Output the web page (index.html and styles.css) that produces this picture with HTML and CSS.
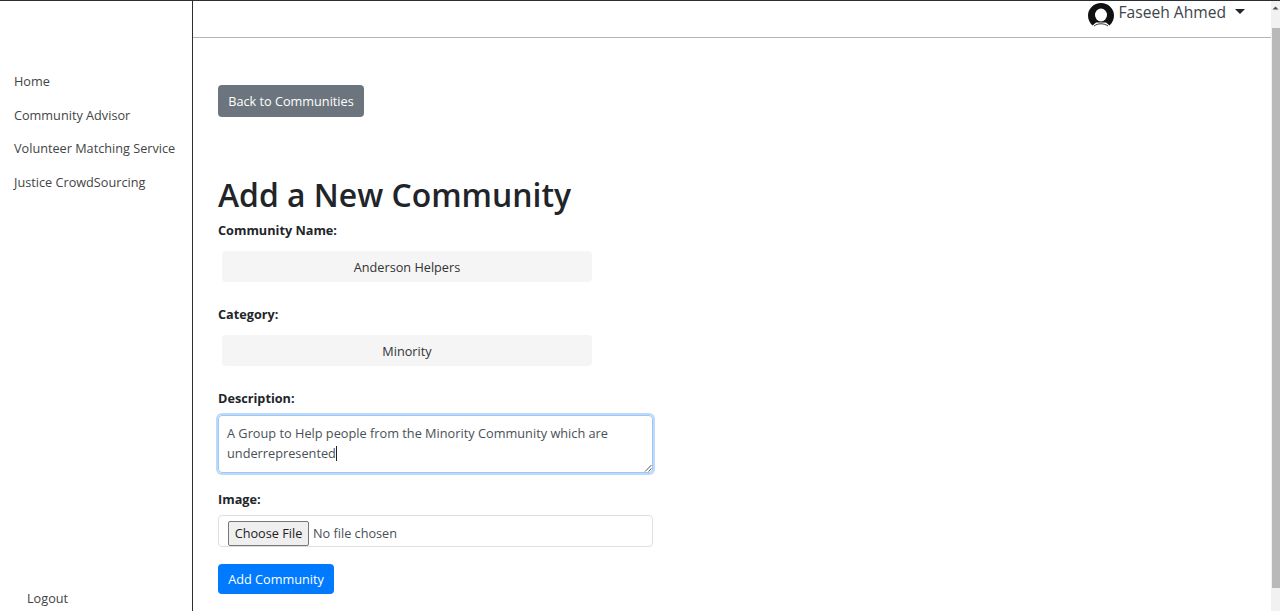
FILE: index.html
```html
<!DOCTYPE html>
<html lang="en">
<head>
<meta charset="utf-8">
<title>Add a New Community</title>
<link rel="stylesheet" href="styles.css">
</head>
<body>
<div class="app">
  <aside class="sidebar">
    <nav class="side-nav">
      <a class="side-link" href="#">Home</a>
      <a class="side-link" href="#">Community Advisor</a>
      <a class="side-link" href="#">Volunteer Matching Service</a>
      <a class="side-link" href="#">Justice CrowdSourcing</a>
    </nav>
    <a class="logout" href="#">Logout</a>
  </aside>
  <div class="main">
    <header class="topbar">
      <svg class="avatar" viewBox="0 0 26 24" width="26" height="24" aria-hidden="true">
        <path d="M13 0a13 12.500 0 0 1 13 12.500c0 4-1.800 7.500-4.500 10L18 19.500h-10l-3.500 3C1.800 20 0 16.500 0 12.500A13 12.500 0 0 1 13 0z" fill="#111"/>
        <ellipse cx="13" cy="12" rx="6" ry="6.500" fill="#fff"/>
        <path d="M6 23c2-1.500 4.500-2.200 7-2.200s5 .7 7 2.200" fill="none" stroke="#333" stroke-width="1"/>
      </svg>
      <span class="user-name">Faseeh Ahmed</span>
      <span class="caret"></span>
    </header>
    <main class="content">
      <a class="btn btn-grey" href="#">Back to Communities</a>
      <h1 class="title">Add a New Community</h1>
      <form class="form">
        <div class="group">
          <label class="label">Community Name:</label>
          <div class="readonly">Anderson Helpers</div>
        </div>
        <div class="group">
          <label class="label">Category:</label>
          <div class="readonly">Minority</div>
        </div>
        <div class="group-desc">
          <label class="label">Description:</label>
          <div class="textarea">A Group to Help people from the Minority Community which are underrepresented<span class="cursor"></span>
            <svg class="grip" viewBox="0 0 8 8" width="8" height="8" aria-hidden="true"><path d="M1 7.500 7.500 1M4.500 7.500 7.500 4.500" stroke="#555" stroke-width="1" fill="none"/></svg>
          </div>
        </div>
        <div class="group-image">
          <label class="label">Image:</label>
          <div class="file-box"><span class="file-btn">Choose File</span><span class="file-text">No file chosen</span></div>
        </div>
        <a class="btn btn-blue" href="#">Add Community</a>
      </form>
    </main>
  </div>
  <div class="scrollbar">
    <svg class="sb-arrow" viewBox="0 0 9 6" width="9" height="6" aria-hidden="true"><path d="M4.500 1.500 7.500 4.500H1.500z" fill="#505050"/></svg>
    <div class="sb-thumb"></div>
  </div>
</div>
</body>
</html>
```
FILE: styles.css
```css
* { box-sizing: border-box; }
html, body { margin: 0; height: 100%; overflow: hidden; }
body { font-family: "Open Sans", "Noto Sans", sans-serif; font-size: 12.7px; color: #212529; background: #fff; }
a { text-decoration: none; }
.app { display: flex; height: 611px; border-top: 1px solid #2b2f33; }
.sidebar { width: 193px; flex: none; border-right: 1px solid #2b2f33; display: flex; flex-direction: column; justify-content: space-between; }
.side-nav { display: flex; flex-direction: column; padding: 70px 0 0 14px; gap: 13.500px; }
.side-link { color: #444; line-height: 20px; }
.logout { color: #444; line-height: 20px; padding: 0 0 3px 27px; }
.main { flex: 1; min-width: 0; display: flex; flex-direction: column; }
.topbar { height: 37px; flex: none; border-bottom: 1px solid #b5b5b5; display: flex; align-items: flex-start; padding: 0 26px 0 0; justify-content: flex-end; }
.avatar { flex: none; margin: 2px 5px 0 0; }
.user-name { font-size: 15.600px; line-height: 22px; color: #3d4349; }
.caret { width: 0; height: 0; border: 5px solid transparent; border-top-color: #212529; border-bottom: 0; margin: 8px 0 0 9px; }
.content { padding: 47px 0 0 25px; display: flex; flex-direction: column; align-items: flex-start; }
.btn { display: block; color: #fff; border-radius: 4px; height: 32px; line-height: 32px; text-align: center; }
.btn-grey { background: #6c757d; width: 146px; }
.btn-blue { background: #007bff; width: 116px; height: 30px; line-height: 30px; }
.title { font-size: 31.900px; font-weight: 600; line-height: 40px; margin: 58px 0 0; color: #212529; }
.form { margin-top: 5px; width: 435px; }
.label { display: block; font-weight: 700; line-height: 20px; }
.group { height: 84px; }
.readonly { width: 370px; height: 31px; margin: 11px 0 0 4px; background: #f5f5f5; border-radius: 4px; text-align: center; line-height: 32px; color: #333; }
.group-desc { height: 101px; }
.textarea { position: relative; margin-top: 7px; height: 58px; border: 1px solid #9cc8fa; border-radius: 4px; padding: 7px 8px; line-height: 20px; font-size: 12.750px; color: #495057; box-shadow: 0 0 0 2px #bcd9fb; }
.cursor { display: inline-block; width: 1px; height: 15px; background: #222; vertical-align: -3px; }
.grip { position: absolute; right: 0; bottom: 0; }
.group-image { height: 67px; }
.file-box { margin-top: 6px; height: 32px; border: 1px solid #dcdfe3; border-radius: 4px; padding: 5px 0 0 9px; display: flex; align-items: flex-start; color: #495057; }
.file-btn { width: 81px; height: 25px; background: #efefef; border: 1px solid #767676; border-radius: 2px; line-height: 23px; text-align: center; color: #222; }
.file-text { margin-left: 4px; line-height: 25px; }
.form > .btn-blue { margin-top: 8px; }
.scrollbar { width: 9px; flex: none; background: #f1f1f1; display: flex; flex-direction: column; align-items: flex-end; }
.sb-arrow { margin: 4px 0 0; }
.sb-thumb { width: 8px; height: 560px; margin-top: 17px; background: #b9b9b9; }
```
